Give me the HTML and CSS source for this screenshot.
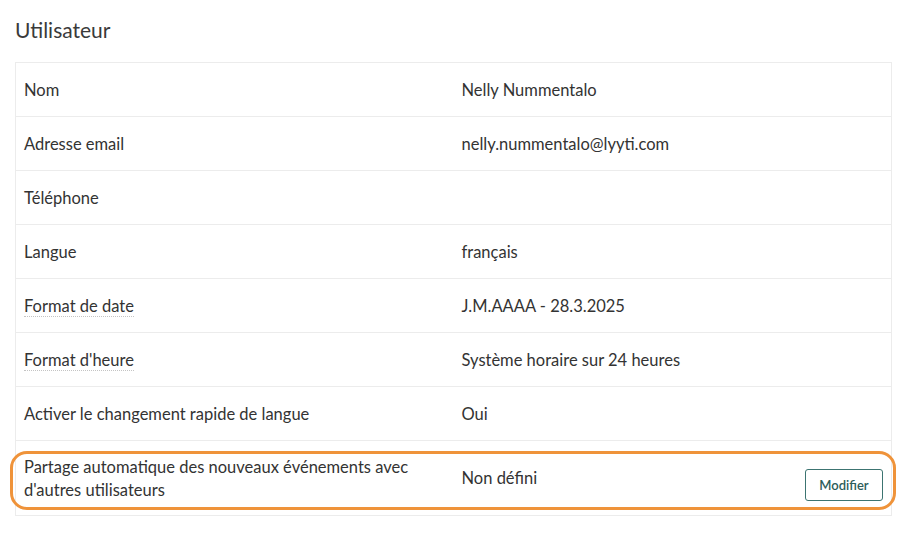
FILE: index.html
```html
<!DOCTYPE html>
<html lang="fr">
<head>
<meta charset="utf-8">
<title>Utilisateur</title>
<link rel="stylesheet" href="styles.css">
</head>
<body>
<main class="page">
  <h1 class="title">Utilisateur</h1>
  <div class="table">
    <div class="row"><div class="cell label">Nom</div><div class="cell value">Nelly Nummentalo</div></div>
    <div class="row"><div class="cell label">Adresse email</div><div class="cell value">nelly.nummentalo@lyyti.com</div></div>
    <div class="row"><div class="cell label">Téléphone</div><div class="cell value"></div></div>
    <div class="row"><div class="cell label">Langue</div><div class="cell value">français</div></div>
    <div class="row"><div class="cell label"><span class="hint">Format de date</span></div><div class="cell value">J.M.AAAA - 28.3.2025</div></div>
    <div class="row"><div class="cell label"><span class="hint">Format d'heure</span></div><div class="cell value">Système horaire sur 24 heures</div></div>
    <div class="row"><div class="cell label">Activer le changement rapide de langue</div><div class="cell value">Oui</div></div>
    <div class="row row-tall highlighted">
      <div class="cell label">Partage automatique des nouveaux événements avec d'autres utilisateurs</div>
      <div class="cell value value-action"><span>Non défini</span><button class="btn">Modifier</button></div>
    </div>
  </div>
</main>
</body>
</html>
```

FILE: styles.css
```css
html, body {
  margin: 0;
  padding: 0;
  background: #ffffff;
}
body {
  font-family: Lato, "Open Sans", "Liberation Sans", sans-serif;
  color: #333333;
}
.page {
  padding: 16px 22px 0 15px;
}
.title {
  margin: 0 0 18px 0;
  font-size: 21px;
  line-height: 28px;
  font-weight: 400;
  color: #3a3a3a;
}
.table {
  border: 1px solid #ececec;
  border-top: none;
}
.row {
  display: grid;
  grid-template-columns: 1fr 1fr;
  min-height: 53px;
  border-top: 1px solid #ececec;
}
.cell {
  display: flex;
  align-items: center;
  padding: 1px 8px 0 8px;
  font-size: 16.5px;
  line-height: 23px;
}
.hint {
  border-bottom: 1px dotted #c4c4c4;
  line-height: 20px;
}
.row-tall {
  min-height: 74px;
}
.highlighted {
  position: relative;
}
.highlighted::after {
  content: "";
  position: absolute;
  left: -6px;
  right: -5px;
  top: 10px;
  bottom: 5px;
  border: 3px solid #ef933a;
  border-radius: 17px;
  pointer-events: none;
}
.row-tall .label {
  padding-right: 24px;
}
.value-action {
  justify-content: space-between;
}
.btn {
  margin-top: 12px;
  width: 78px;
  height: 32px;
  padding: 0;
  background: #ffffff;
  border: 1px solid #3c7471;
  border-radius: 3px;
  color: #2d5c5a;
  font-family: Lato, "Open Sans", "Liberation Sans", sans-serif;
  font-size: 13px;
  font-weight: 600;
}
```
